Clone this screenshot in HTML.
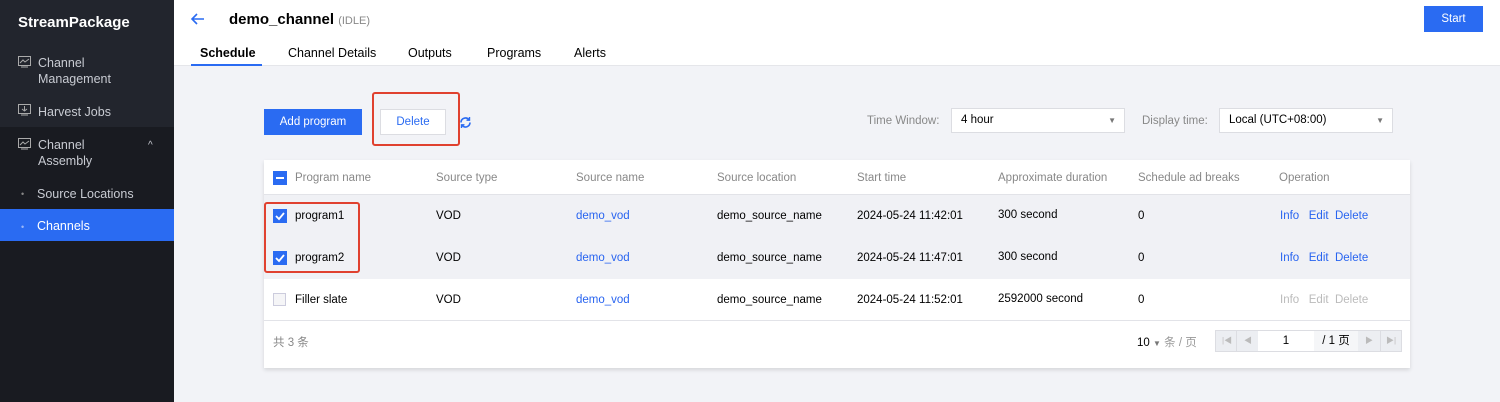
<!DOCTYPE html><html><head><meta charset="utf-8"><style>
*{box-sizing:border-box;margin:0;padding:0}
body{width:1500px;height:402px;overflow:hidden;font-family:"Liberation Sans","Noto Sans CJK SC",sans-serif;font-size:11.5px;color:#000;background:#f2f3f7;position:relative}
.a{position:absolute}
.side{left:0;top:0;width:174px;height:402px;background:#22252d}
.side .t{color:#fff;font-weight:bold;font-size:15px;left:18px;top:14px}
.nav{color:#c8cbd2;font-size:12.5px;line-height:16px}
.hdr{left:174px;top:0;width:1326px;height:66px;background:#fff;border-bottom:1px solid #e5e6ea}
.tab{font-size:12.5px;top:46px;color:#000}
.th{color:#888;top:172px}
.lnk{color:#2864f0}
.cb{width:13px;height:13px;border:1px solid #ccd;background:#f5f5f7}
.cbo{width:14px;height:14px;background:#2a6bf2}
.sel{border:1px solid #dcdde2;background:#fff;height:25px;padding:0 9px;line-height:23px}
</style></head><body>
<div class="a side">
<div class="a t">StreamPackage</div>
<svg class="a" style="left:18px;top:56px" width="13" height="12"><rect x=".5" y=".5" width="12" height="9" fill="none" stroke="#aaa"/><path d="M2 7l3-3 2 2 4-3" stroke="#aaa" fill="none"/><path d="M3 11h7" stroke="#aaa"/></svg>
<div class="a nav" style="left:38px;top:55px">Channel<br>Management</div>
<svg class="a" style="left:18px;top:104px" width="13" height="12"><rect x=".5" y=".5" width="12" height="9" fill="none" stroke="#aaa"/><path d="M6.5 2v5M4 5l2.5 2 2.5-2" stroke="#aaa" fill="none"/><path d="M3 11h7" stroke="#aaa"/></svg>
<div class="a nav" style="left:38px;top:104px">Harvest Jobs</div>
<div class="a" style="left:0;top:127px;width:174px;height:275px;background:#191b21"></div>
<svg class="a" style="left:18px;top:138px" width="13" height="12"><rect x=".5" y=".5" width="12" height="9" fill="none" stroke="#aaa"/><path d="M2 7l3-3 2 2 4-3" stroke="#aaa" fill="none"/><path d="M3 11h7" stroke="#aaa"/></svg>
<div class="a nav" style="left:38px;top:137px">Channel<br>Assembly</div>
<div class="a nav" style="left:148px;top:138px;font-size:10px">^</div>
<div class="a nav" style="left:21px;top:186px;font-size:9px;color:#888">•</div>
<div class="a nav" style="left:37px;top:186px">Source Locations</div>
<div class="a" style="left:0;top:209px;width:174px;height:32px;background:#2a6bf2"></div>
<div class="a nav" style="left:21px;top:219px;font-size:9px;color:#9bb8f8">•</div>
<div class="a nav" style="left:37px;top:218px;color:#fff">Channels</div>
</div>
<div class="a hdr"></div>
<svg class="a" style="left:190px;top:12px" width="16" height="14"><path d="M14 7H2M7 2L2 7l5 5" stroke="#2a6bf2" stroke-width="1.6" fill="none"/></svg>
<div class="a" style="left:229px;top:11px;font-size:15px;font-weight:bold">demo_channel <span style="font-size:11px;color:#888;font-weight:normal">(IDLE)</span></div>
<div class="a" style="left:1424px;top:6px;width:59px;height:26px;background:#2a6bf2;color:#fff;text-align:center;line-height:26px">Start</div>
<div class="a tab" style="left:200px;font-weight:bold">Schedule</div>
<div class="a" style="left:191px;top:64px;width:71px;height:2px;background:#2a6bf2"></div>
<div class="a tab" style="left:288px">Channel Details</div>
<div class="a tab" style="left:408px">Outputs</div>
<div class="a tab" style="left:487px">Programs</div>
<div class="a tab" style="left:574px">Alerts</div>

<div class="a" style="left:264px;top:109px;width:98px;height:26px;background:#2a6bf2;color:#fff;text-align:center;line-height:26px">Add program</div>
<div class="a" style="left:380px;top:109px;width:66px;height:26px;background:#fff;border:1px solid #dcdde2;color:#2a6bf2;text-align:center;line-height:24px">Delete</div>
<div class="a" style="left:372px;top:92px;width:88px;height:54px;border:2px solid #e0412f;border-radius:3px"></div>
<svg class="a" style="left:459px;top:116px" width="13" height="13"><path d="M2 6.5a4.5 4.5 0 0 1 8-2.8M11 6.5a4.5 4.5 0 0 1-8 2.8" stroke="#2a6bf2" stroke-width="1.6" fill="none"/><path d="M10.5 1v3.2H7.5M2.5 12V8.8h3" stroke="#2a6bf2" stroke-width="1.4" fill="none"/></svg>

<div class="a" style="left:867px;top:115px;color:#888">Time Window:</div>
<div class="a sel" style="left:951px;top:108px;width:174px">4 hour<span style="position:absolute;right:8px;color:#777;font-size:8px">▼</span></div>
<div class="a" style="left:1142px;top:115px;color:#888">Display time:</div>
<div class="a sel" style="left:1219px;top:108px;width:174px">Local (UTC+08:00)<span style="position:absolute;right:8px;color:#777;font-size:8px">▼</span></div>

<div class="a" style="left:264px;top:160px;width:1146px;height:208px;background:#fff;box-shadow:0 2px 4px rgba(0,0,0,.12)"></div>
<div class="a" style="left:264px;top:194px;width:1146px;height:1px;background:#e2e3e8"></div>
<div class="a" style="left:264px;top:195px;width:1146px;height:84px;background:#f0f1f5"></div>
<div class="a" style="left:264px;top:320px;width:1146px;height:1px;background:#e2e3e8"></div>
<div class="a cbo" style="left:273px;top:171px"><div style="position:absolute;left:3px;top:6px;width:8px;height:2px;background:#fff"></div></div>
<div class="a th" style="left:295px">Program name</div><div class="a th" style="left:436px">Source type</div><div class="a th" style="left:576px">Source name</div><div class="a th" style="left:717px">Source location</div><div class="a th" style="left:857px">Start time</div><div class="a th" style="left:998px">Approximate duration</div><div class="a th" style="left:1138px">Schedule ad breaks</div><div class="a th" style="left:1279px">Operation</div>

<div class="a cbo" style="left:273px;top:209px"><svg width="14" height="14"><path d="M3 7l3 3 5-6" stroke="#fff" stroke-width="1.8" fill="none"/></svg></div>
<div class="a" style="left:295px;top:210px">program1</div><div class="a" style="left:436px;top:210px">VOD</div><div class="a lnk" style="left:576px;top:210px">demo_vod</div><div class="a" style="left:717px;top:210px">demo_source_name</div><div class="a" style="left:857px;top:210px">2024-05-24 11:42:01</div><div class="a" style="left:998px;top:209px">300 second</div><div class="a" style="left:1138px;top:210px">0</div><div class="a lnk" style="left:1280px;top:210px">Info&nbsp;&nbsp; Edit&nbsp; Delete</div>

<div class="a cbo" style="left:273px;top:251px"><svg width="14" height="14"><path d="M3 7l3 3 5-6" stroke="#fff" stroke-width="1.8" fill="none"/></svg></div>
<div class="a" style="left:295px;top:252px">program2</div><div class="a" style="left:436px;top:252px">VOD</div><div class="a lnk" style="left:576px;top:252px">demo_vod</div><div class="a" style="left:717px;top:252px">demo_source_name</div><div class="a" style="left:857px;top:252px">2024-05-24 11:47:01</div><div class="a" style="left:998px;top:251px">300 second</div><div class="a" style="left:1138px;top:252px">0</div><div class="a lnk" style="left:1280px;top:252px">Info&nbsp;&nbsp; Edit&nbsp; Delete</div>
<div class="a" style="left:264px;top:202px;width:96px;height:71px;border:2px solid #e0412f;border-radius:3px"></div>

<div class="a cb" style="left:273px;top:293px"></div>
<div class="a" style="left:295px;top:294px">Filler slate</div><div class="a" style="left:436px;top:294px">VOD</div><div class="a lnk" style="left:576px;top:294px">demo_vod</div><div class="a" style="left:717px;top:294px">demo_source_name</div><div class="a" style="left:857px;top:294px">2024-05-24 11:52:01</div><div class="a" style="left:998px;top:293px">2592000 second</div><div class="a" style="left:1138px;top:294px">0</div><div class="a" style="left:1280px;top:294px;color:#bbb">Info&nbsp;&nbsp; Edit&nbsp; Delete</div>

<div class="a" style="left:273px;top:334px;color:#888">共 3 条</div>
<div class="a" style="left:1137px;top:334px">10 <span style="font-size:8px;color:#777">▼</span> <span style="color:#999">条 / 页</span></div>
<div class="a" style="left:1215px;top:330px;width:187px;height:22px;border:1px solid #dcdde2;background:#eceef2"></div>
<div class="a" style="left:1258px;top:331px;width:56px;height:20px;background:#fff;text-align:center;line-height:20px">1</div>
<div class="a" style="left:1314px;top:331px;width:44px;height:20px;background:#f5f6f8;text-align:center;line-height:20px">/ 1 页</div>
<div class="a" style="left:1236px;top:331px;width:1px;height:20px;background:#dcdde2"></div>
<div class="a" style="left:1380px;top:331px;width:1px;height:20px;background:#dcdde2"></div>
<div class="a" style="left:1222px;top:335px;color:#bbb;font-size:8px">|◀</div>
<div class="a" style="left:1244px;top:335px;color:#bbb;font-size:8px">◀</div>
<div class="a" style="left:1365px;top:335px;color:#bbb;font-size:8px">▶</div>
<div class="a" style="left:1386px;top:335px;color:#bbb;font-size:8px">▶|</div>
</body></html>
